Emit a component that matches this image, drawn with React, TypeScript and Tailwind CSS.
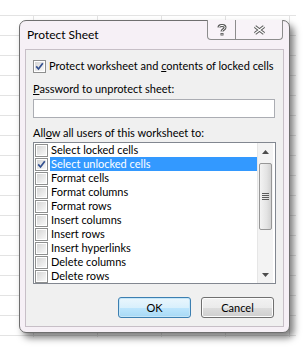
import { useState } from "react";

const rows = [
  "Select locked cells",
  "Select unlocked cells",
  "Format cells",
  "Format columns",
  "Format rows",
  "Insert columns",
  "Insert rows",
  "Insert hyperlinks",
  "Delete columns",
  "Delete rows",
];

function Check({ on }: { on?: boolean }) {
  return (
    <span className="flex w-[13px] h-[13px] shrink-0 border border-[#8e8f8f] bg-white p-px">
      <span className="flex w-full h-full items-center justify-center bg-[linear-gradient(135deg,#d6d6d6,#f8f8f8)]">
        {on && (
          <svg width="9" height="9" viewBox="0 0 9 9">
            <path d="M1.2 4.4 L3.5 7 L7.8 1.2" fill="none" stroke="#33508f" strokeWidth="1.7" />
          </svg>
        )}
      </span>
    </span>
  );
}

function Btn({ label, main }: { label: string; main?: boolean }) {
  return (
    <button
      className={
        main
          ? "w-[73px] h-[21px] rounded-[3px] border border-[#3c7fb1] bg-[linear-gradient(#eaf6fd_0%,#d9f0fc_50%,#bee6fd_51%,#a7d9f5_100%)] text-black shadow-[inset_0_0_0_1px_#c5e6f8]"
          : "w-[73px] h-[21px] rounded-[3px] border border-[#707070] bg-[linear-gradient(#f2f2f2_0%,#ebebeb_50%,#dddddd_51%,#cfcfcf_100%)] text-black shadow-[inset_0_0_0_1px_#fcfcfc]"
      }
    >
      {label}
    </button>
  );
}

function ScrollBar() {
  return (
    <div className="flex flex-col w-[16px] h-full bg-[#f3f3f3] border-l border-[#e6e6e6]">
      <div className="h-[17px] flex items-center justify-center">
        <svg width="7" height="4" viewBox="0 0 7 4">
          <path d="M0 4 L3.5 0 L7 4 Z" fill="#4d4d4d" />
        </svg>
      </div>
      <div className="mt-[3px] mx-px h-[67px] rounded-[2px] border border-[#979797] bg-[linear-gradient(to_right,#f3f3f3,#e4e4e4_60%,#d2d2d2)] flex flex-col items-center justify-center gap-px">
        <span className="block w-[7px] h-px bg-[#5b5b5b]" />
        <span className="block w-[7px] h-px bg-[#5b5b5b]" />
        <span className="block w-[7px] h-px bg-[#5b5b5b]" />
        <span className="block w-[7px] h-px bg-[#5b5b5b]" />
      </div>
      <div className="flex-1" />
      <div className="h-[17px] flex items-center justify-center">
        <svg width="7" height="4" viewBox="0 0 7 4">
          <path d="M0 0 L7 0 L3.5 4 Z" fill="#4d4d4d" />
        </svg>
      </div>
    </div>
  );
}

export default function App() {
  const [checked] = useState([false, true, false, false, false, false, false, false, false, false]);
  return (
    <div className="w-[307px] h-[353px] bg-white pt-[15px] font-['Lato',sans-serif] text-[11px] leading-[16px] text-black overflow-hidden whitespace-nowrap">
      <div className="w-[296px] h-[322px] pl-[19px] pt-[5px] bg-[linear-gradient(to_right,#e3e3e3_1px,transparent_1px),linear-gradient(to_bottom,#e3e3e3_1px,transparent_1px)] [background-size:64px_20px] [background-position:33px_0px]">
        <div className="w-[271px] h-[313px] flex flex-col rounded-[7px] border border-[#6f6f6f] bg-[#f6f0f6] shadow-[4px_5px_7px_rgba(0,0,0,0.5)] px-[5px] pb-[5px]">
          <div className="h-[28px] flex justify-between items-start pl-[2px] pr-px">
            <span className="mt-[6px] text-[12px]">Protect Sheet</span>
            <div className="-mt-px flex h-[20px] border border-t-0 border-[#8c8c8c] rounded-b-[4px] bg-[#f8f3f8]">
              <div className="w-[28px] flex items-center justify-center border-r border-[#8c8c8c]">
                <svg width="10" height="12" viewBox="0 0 10 12">
                  <path d="M2 3.5 C2 0.8 8 0.8 8 3.5 C8 5.5 5 5.5 5 7.5" fill="none" stroke="#5a5a5a" strokeWidth="3" />
                  <path d="M2 3.5 C2 0.8 8 0.8 8 3.5 C8 5.5 5 5.5 5 7.5" fill="none" stroke="#ffffff" strokeWidth="1" />
                  <rect x="3.5" y="9" width="3" height="2.5" fill="#5a5a5a" />
                  <rect x="4.5" y="9.8" width="1" height="1" fill="#ffffff" />
                </svg>
              </div>
              <div className="w-[46px] flex items-center justify-center">
                <svg width="13" height="10" viewBox="0 0 13 10">
                  <path d="M2 1.5 L11 8.5 M11 1.5 L2 8.5" fill="none" stroke="#5a5a5a" strokeWidth="3.4" />
                  <path d="M2 1.5 L11 8.5 M11 1.5 L2 8.5" fill="none" stroke="#ffffff" strokeWidth="1.3" />
                </svg>
              </div>
            </div>
          </div>
          <div className="flex-1 flex flex-col border border-[#c7bfc7] bg-[#f0f0f0] px-[7px]">
            <label className="mt-[9px] h-[14px] flex items-center gap-[3px]">
              <Check on />
              <span>
                Protect worksheet and <u>c</u>ontents of locked cells
              </span>
            </label>
            <div className="mt-[8px] h-[16px]">
              <u>P</u>assword to unprotect sheet:
            </div>
            <input
              type="password"
              className="mt-[2px] h-[19px] w-[242px] border border-[#abadb3] bg-white outline-none"
            />
            <div className="mt-[7px] h-[16px]">
              All<u>o</u>w all users of this worksheet to:
            </div>
            <div className="mt-px h-[142px] w-[243px] flex border border-[#828790] bg-white pl-px pr-[2px]">
              <div className="flex-1 flex flex-col">
                {rows.map((r, i) => (
                  <div key={r} className="h-[14px] flex items-center gap-[2px]">
                    <Check on={checked[i]} />
                    <span
                      className={
                        i === 1
                          ? "flex-1 h-[14px] pl-px leading-[14px] bg-[#3399ff] text-white"
                          : "flex-1 h-[14px] pl-px leading-[14px]"
                      }
                    >
                      {r}
                    </span>
                  </div>
                ))}
              </div>
              <ScrollBar />
            </div>
            <div className="mt-[13px] flex justify-end gap-[10px] pr-[2px]">
              <Btn label="OK" main />
              <Btn label="Cancel" />
            </div>
          </div>
        </div>
      </div>
    </div>
  );
}
